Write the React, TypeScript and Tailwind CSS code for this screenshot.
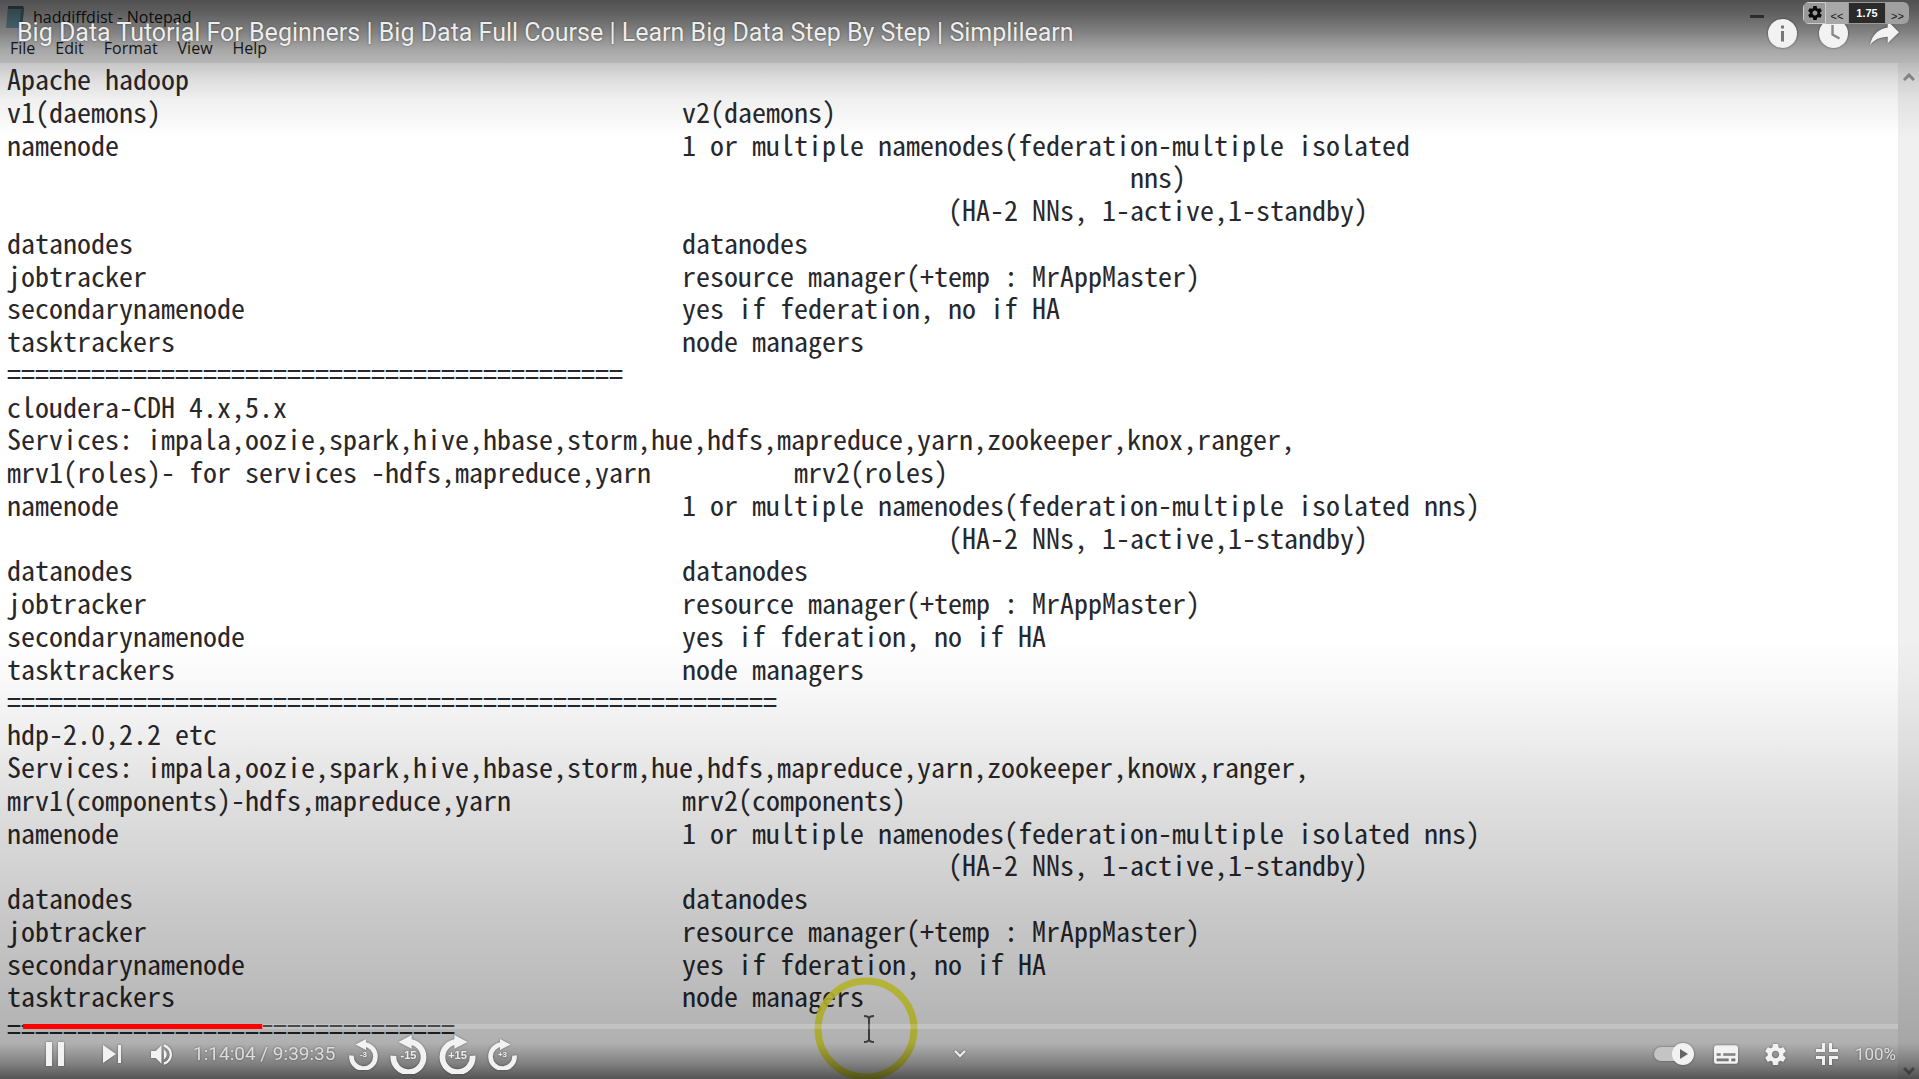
import React from "react";

type Line = { left?: string; right?: string; indent?: number };

const SERVICES = "Services: impala,oozie,spark,hive,hbase,storm,hue,hdfs,mapreduce,yarn,zookeeper,";

const LINES: Line[] = [
  { left: "Apache hadoop" },
  { left: "v1(daemons)", right: "v2(daemons)" },
  { left: "namenode", right: "1 or multiple namenodes(federation-multiple isolated" },
  { right: "nns)", indent: 32 },
  { right: "(HA-2 NNs, 1-active,1-standby)", indent: 19 },
  { left: "datanodes", right: "datanodes" },
  { left: "jobtracker", right: "resource manager(+temp : MrAppMaster)" },
  { left: "secondarynamenode", right: "yes if federation, no if HA" },
  { left: "tasktrackers", right: "node managers" },
  { left: "=".repeat(44) },
  { left: "cloudera-CDH 4.x,5.x" },
  { left: SERVICES + "knox,ranger," },
  { left: "mrv1(roles)- for services -hdfs,mapreduce,yarn", right: "mrv2(roles)", indent: 8 },
  { left: "namenode", right: "1 or multiple namenodes(federation-multiple isolated nns)" },
  { right: "(HA-2 NNs, 1-active,1-standby)", indent: 19 },
  { left: "datanodes", right: "datanodes" },
  { left: "jobtracker", right: "resource manager(+temp : MrAppMaster)" },
  { left: "secondarynamenode", right: "yes if fderation, no if HA" },
  { left: "tasktrackers", right: "node managers" },
  { left: "=".repeat(55) },
  { left: "hdp-2.0,2.2 etc" },
  { left: SERVICES + "knowx,ranger," },
  { left: "mrv1(components)-hdfs,mapreduce,yarn", right: "mrv2(components)" },
  { left: "namenode", right: "1 or multiple namenodes(federation-multiple isolated nns)" },
  { right: "(HA-2 NNs, 1-active,1-standby)", indent: 19 },
  { left: "datanodes", right: "datanodes" },
  { left: "jobtracker", right: "resource manager(+temp : MrAppMaster)" },
  { left: "secondarynamenode", right: "yes if fderation, no if HA" },
  { left: "tasktrackers", right: "node managers" },
  { left: "=".repeat(32) },
];

const GEAR =
  "m 23.94,18.78 c .03,-0.25 .05,-0.51 .05,-0.78 0,-0.27 -0.02,-0.52 -0.05,-0.78 l 1.68,-1.32 c .15,-0.12 .19,-0.33 .09,-0.51 l -1.6,-2.76 c -0.09,-0.17 -0.31,-0.24 -0.48,-0.17 l -1.99,.8 c -0.41,-0.32 -0.86,-0.58 -1.35,-0.78 l -0.30,-2.12 c -0.02,-0.19 -0.19,-0.33 -0.39,-0.33 l -3.2,0 c -0.2,0 -0.36,.14 -0.39,.33 l -0.30,2.12 c -0.48,.2 -0.93,.47 -1.35,.78 l -1.99,-0.8 c -0.18,-0.07 -0.39,0 -0.48,.17 l -1.6,2.76 c -0.10,.17 -0.05,.39 .09,.51 l 1.68,1.32 c -0.03,.25 -0.05,.52 -0.05,.78 0,.26 .02,.52 .05,.78 l -1.68,1.32 c -0.15,.12 -0.19,.33 -0.09,.51 l 1.6,2.76 c .09,.17 .31,.24 .48,.17 l 1.99,-0.8 c .41,.32 .86,.58 1.35,.78 l .30,2.12 c .02,.19 .19,.33 .39,.33 l 3.2,0 c .2,0 .36,-0.14 .39,-0.33 l .30,-2.12 c .48,-0.2 .93,-0.47 1.35,-0.78 l 1.99,.8 c .18,.07 .39,0 .48,-0.17 l 1.6,-2.76 c .09,-0.17 .05,-0.39 -0.09,-0.51 l -1.68,-1.32z m -5.94,2.01 c -1.54,0 -2.8,-1.25 -2.8,-2.8 0,-1.54 1.25,-2.8 2.8,-2.8 1.54,0 2.8,1.25 2.8,2.8 0,1.54 -1.25,2.8 -2.8,2.8z";

function Notepad() {
  return (
    <section aria-label="Notepad" className="flex h-full flex-col bg-white text-[#28282c]">
      <header className="flex h-[63px] shrink-0 flex-col bg-[#ebebeb] font-['Open_Sans',sans-serif] text-[16px] text-[#222]">
        <div className="flex h-[33px] items-center gap-2 pl-[5px]">
          <svg viewBox="0 0 20 24" className="h-6 w-5" aria-hidden="true">
            <path d="M3 1h15l1 3-2 19H1z" fill="#7fb6c6" />
            <path d="M3 1h15l1 3H3z" fill="#56757f" />
            <path d="M17 23l2-19-3 1-2 18z" fill="#5d8997" />
          </svg>
          <span>haddiffdist - Notepad</span>
          <button aria-label="Minimize" className="mr-[155px] ml-auto h-[3px] w-[14px] bg-[#666]" />
        </div>
        <nav className="flex h-[30px] items-center gap-5 pl-[10px]">
          {["File", "Edit", "Format", "View", "Help"].map((m) => (
            <button key={m}>{m}</button>
          ))}
        </nav>
      </header>
      <div className="flex min-h-0 flex-1">
        <div className="flex flex-1 flex-col pt-px pb-[32px] pl-[7px] font-['Noto_Sans_Mono_CJK_SC','Noto_Sans_CJK_SC','Liberation_Mono',monospace] text-[28px] leading-[28px] whitespace-pre">
          {LINES.map((l, i) => (
            <div key={i} className="flex min-h-0 flex-1 items-start">
              <span className={l.right ? "w-[675px] shrink-0" : ""}>{l.left}</span>
              {l.right && <span>{" ".repeat(l.indent ?? 0) + l.right}</span>}
            </div>
          ))}
        </div>
        <div className="flex w-[21px] flex-col items-center justify-between bg-[#f0f0f0] pt-[10px] pb-[4px] text-[#999]">
          <svg viewBox="0 0 12 8" className="h-2 w-3" fill="none" stroke="currentColor" strokeWidth="3">
            <path d="M1 7l5-5 5 5" />
          </svg>
          <svg viewBox="0 0 12 8" className="h-2 w-3" fill="none" stroke="currentColor" strokeWidth="3">
            <path d="M1 1l5 5 5-5" />
          </svg>
        </div>
      </div>
    </section>
  );
}

function Pointer() {
  return (
    <svg viewBox="0 0 106 106" className="absolute bottom-[-3px] left-[813px] h-[106px] w-[106px]" fill="none" aria-hidden="true">
      <circle cx="53" cy="53" r="48" stroke="#f2f238" strokeWidth="7" strokeOpacity=".9" />
      <path d="M51 40q5 0 5 3v20q0 3-5 3M61 40q-5 0-5 3v20q0 3 5 3" stroke="#555" strokeWidth="2" />
    </svg>
  );
}

function Seek({ label, flip, big }: { label: string; flip?: boolean; big?: boolean }) {
  return (
    <button
      aria-label={`Seek ${label} seconds`}
      className={big ? "relative flex h-[39px] w-[37px] justify-center" : "relative flex h-[31px] w-[29px] justify-center"}
    >
      <svg viewBox="0 0 29 31" className={flip ? "absolute inset-0 h-full w-full -scale-x-100" : "absolute inset-0 h-full w-full"}>
        <path d="M2.5 16.5A12 12 0 1 0 14.5 5.5" fill="none" stroke="#f2f2f2" strokeWidth="4.6" />
        <path d="M6.5 5.5L17 0v11z" fill="#f2f2f2" />
      </svg>
      <span
        className={
          big
            ? "relative mt-[13px] font-['Liberation_Sans',sans-serif] text-[11px] leading-[14px] font-bold"
            : "relative mt-[10px] font-['Liberation_Sans',sans-serif] text-[8px] leading-[12px] font-bold"
        }
      >
        {label}
      </span>
    </button>
  );
}

export default function App() {
  return (
    <main className="relative h-screen w-full overflow-hidden bg-white font-['Roboto',sans-serif] text-[#eee]">
      <Notepad />
      <Pointer />
      <div className="absolute inset-x-0 top-0 h-[140px] bg-[linear-gradient(to_bottom,rgba(0,0,0,.66)_0px,rgba(0,0,0,.6)_12px,rgba(0,0,0,.45)_32px,rgba(0,0,0,.29)_50px,rgba(0,0,0,.22)_64px,rgba(0,0,0,.13)_80px,rgba(0,0,0,.06)_100px,rgba(0,0,0,0)_138px)]" />
      <div className="absolute inset-x-0 bottom-0 h-[439px] bg-[linear-gradient(to_top,rgba(0,0,0,.67)_0px,rgba(0,0,0,.49)_16px,rgba(0,0,0,.31)_36px,rgba(0,0,0,.29)_59px,rgba(0,0,0,.26)_99px,rgba(0,0,0,.22)_159px,rgba(0,0,0,.17)_219px,rgba(0,0,0,.125)_279px,rgba(0,0,0,.07)_339px,rgba(0,0,0,.03)_389px,rgba(0,0,0,0)_439px)]" />

      <div className="absolute inset-0 flex flex-col justify-between">
        <header className="flex h-[66px] items-center justify-between pr-5 pl-[17px]">
          <h1 className="text-[25px] leading-8 [text-shadow:0_0_2px_rgba(0,0,0,.5)]">
            <a href="#video">Big Data Tutorial For Beginners | Big Data Full Course | Learn Big Data Step By Step | Simplilearn</a>
          </h1>
          <div className="flex items-center gap-[22px] drop-shadow-[0_0_1px_rgba(0,0,0,.5)]">
            <button aria-label="Info">
              <svg viewBox="0 0 29 29" className="h-[29px] w-[29px]">
                <circle cx="14.5" cy="14.5" r="14.5" fill="#f2f2f2" />
                <path d="M13 6.5h3v3h-3zM13 12h3v10.500h-3z" fill="#777" />
              </svg>
            </button>
            <button aria-label="Watch later">
              <svg viewBox="0 0 29 29" className="h-[29px] w-[29px]">
                <circle cx="14.5" cy="14.5" r="14.5" fill="#f2f2f2" />
                <path d="M13.500 6v9.500l7 4" fill="none" stroke="#888" strokeWidth="2.400" />
              </svg>
            </button>
            <button aria-label="Share">
              <svg viewBox="8 9 20 18" className="h-[26px] w-[29px]" fill="#f2f2f2">
                <path d="m 20.20,14.19 0,-4.45 7.79,7.79 -7.79,7.56 0,-4.56 C 16.27,20.69 12.10,21.81 9.34,24.76 8.80,25.13 7.60,27.29 8.12,25.65 9.08,21.32 11.80,17.18 15.98,15.38 c 1.33,-0.60 2.76,-0.98 4.21,-1.19 z" />
              </svg>
            </button>
          </div>
        </header>

        <footer className="h-[55px]">
          <div role="progressbar" aria-label="Playback position" aria-valuenow={13} className="mr-[21px] ml-[23px] h-[5px] bg-white/20">
            <div className="h-full w-[240px] border-r border-white/50 bg-[#f00]" />
          </div>
          <div className="grid h-[50px] grid-cols-[1fr_auto_1fr] items-center drop-shadow-[0_0_1px_rgba(0,0,0,.4)]">
            <div className="flex items-center pl-[45px]">
              <button aria-label="Pause">
                <svg viewBox="0 0 21 24" className="h-6 w-[21px]" fill="#f2f2f2">
                  <path d="M1 0h6v24H1zM13 0h6v24h-6z" />
                </svg>
              </button>
              <button aria-label="Next" className="ml-[37px]">
                <svg viewBox="0 0 19 18" className="h-[18px] w-[19px]" fill="#f2f2f2">
                  <path d="M0 0l13 9-13 9zM15 0h3v18h-3z" />
                </svg>
              </button>
              <button aria-label="Mute" className="ml-[29px]">
                <svg viewBox="8 9 18 18" className="h-[21px] w-[21px]" fill="#f2f2f2">
                  <path d="M8,21 L12,21 L17,26 L17,10 L12,15 L8,15 Z M19,14 L19,22 C20.48,21.32 21.5,19.77 21.5,18 C21.5,16.26 20.48,14.74 19,14 ZM19,11.29 C21.89,12.15 24,14.83 24,18 C24,21.17 21.89,23.85 19,24.71 L19,26.77 C23.01,25.86 26,22.28 26,18 C26,13.72 23.01,10.14 19,9.23 Z" />
                </svg>
              </button>
              <span className="ml-[21px] w-[142px] text-[19px] leading-6 whitespace-nowrap text-[#ddd]">1:14:04 / 9:39:35</span>
              <div className="ml-[14px] flex items-center gap-3">
                <Seek label="-3" />
                <Seek label="-15" big />
                <Seek label="+15" big flip />
                <Seek label="+3" flip />
              </div>
            </div>
            <button aria-label="More">
              <svg viewBox="0 0 12 8" className="h-2 w-3" fill="none" stroke="#f2f2f2" strokeWidth="2">
                <path d="M1 1l5 5 5-5" />
              </svg>
            </button>
            <div className="flex items-center justify-end pr-[23px]">
              <button role="switch" aria-checked="true" aria-label="Autoplay" className="mr-[19px]">
                <svg viewBox="0 0 41 22" className="h-[22px] w-[41px]">
                  <rect x="0" y="4" width="36" height="14" rx="7" fill="#c4c4c4" />
                  <circle cx="29" cy="11" r="11" fill="#f2f2f2" />
                  <path d="M26 6l8 5-8 5z" fill="#666" />
                </svg>
              </button>
              <button aria-label="Subtitles" className="mr-[27px]">
                <svg viewBox="9 11 18 14" className="h-[19px] w-6" fill="#f2f2f2">
                  <path fillRule="evenodd" d="M11,11 C9.89,11 9,11.9 9,13 L9,23 C9,24.1 9.89,25 11,25 L25,25 C26.1,25 27,24.1 27,23 L27,13 C27,11.9 26.1,11 25,11 Z M11,17 L14,17 14,19 11,19z M20,23 11,23 11,21 20,21z M25,23 22,23 22,21 25,21z M25,19 16,19 16,17 25,17z" />
                </svg>
              </button>
              <button aria-label="Settings" className="mr-[30px]">
                <svg viewBox="10 10 16 16" className="h-[21px] w-[21px]" fill="#f2f2f2">
                  <path d={GEAR} />
                </svg>
              </button>
              <button aria-label="Exit full screen" className="mr-[17px]">
                <svg viewBox="0 0 22 22" className="h-[22px] w-[22px]" fill="none" stroke="#f2f2f2" strokeWidth="3">
                  <path d="M0 7.500h7.500V0M14.500 0v7.500H22M0 14.500h7.500V22M14.500 22v-7.500H22" />
                </svg>
              </button>
              <span className="text-[17px] leading-6 text-[#ddd]">100%</span>
            </div>
          </div>
        </footer>
      </div>

      <div className="absolute top-[2px] right-[10px] flex h-[22px] items-stretch overflow-hidden rounded-md font-['Liberation_Sans',sans-serif] text-[#111]">
        <button aria-label="Speed settings" className="flex w-[23px] items-center justify-center border border-[#ccc] bg-[#999]">
          <svg viewBox="10 10 16 16" className="h-[14px] w-[14px]" fill="#0a0a0a">
            <path d={GEAR} />
          </svg>
        </button>
        <button className="w-[22px] bg-[#a8a8a8] pt-[6px] text-[11px] leading-4">&lt;&lt;</button>
        <output className="w-[38px] border border-[#999] bg-[#2a2a2a] text-center text-[11px] leading-5 font-bold text-white">1.75</output>
        <button className="w-[23px] bg-[#a0a0a0] pt-[6px] text-[11px] leading-4">&gt;&gt;</button>
      </div>
    </main>
  );
}
